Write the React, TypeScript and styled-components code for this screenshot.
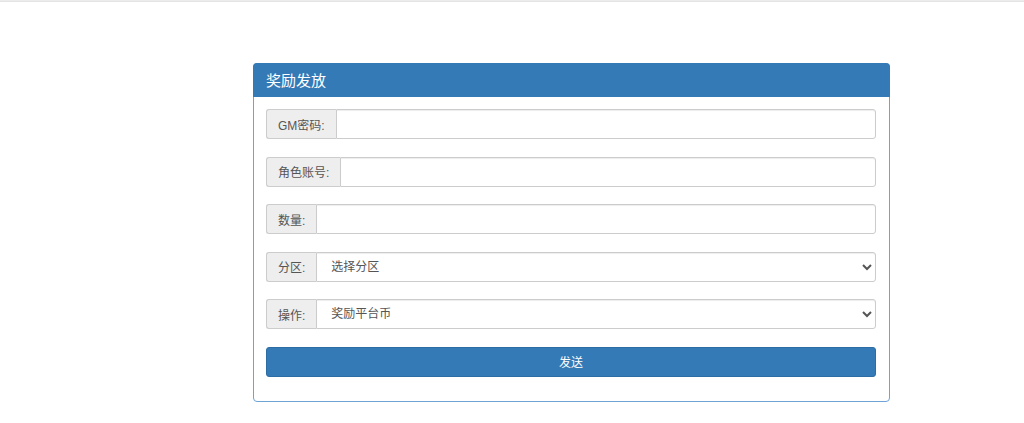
import React, { FC } from "react";
import styled, { createGlobalStyle } from "styled-components";

const GlobalStyle = createGlobalStyle`
  html, body {
    margin: 0;
    padding: 0;
    background: #fff;
    font-family: "Liberation Sans", "Noto Sans CJK SC", sans-serif;
    font-size: 12px;
    color: #333;
  }
  * {
    box-sizing: border-box;
  }
`;

const StyleTopLine = styled.div`
  height: 2px;
  border-top: 1px solid #ececec;
  border-bottom: 1px solid #e4e4e4;
`;

const StylePage = styled.div`
  display: flex;
  padding: 61px 0 0 253px;
`;

const StylePanel = styled.div`
  width: 637px;
  border: 1px solid #6ea3d5;
  border-radius: 4px;
  background: #fff;
`;

const StyleHeading = styled.div`
  height: 34px;
  margin: -1px -1px 0;
  display: flex;
  align-items: center;
  padding: 0 13px;
  background-color: #337ab7;
  color: #fff;
  border-top-left-radius: 4px;
  border-top-right-radius: 4px;
`;

const StyleTitle = styled.h3`
  margin: 0;
  font-size: 15px;
  font-weight: 400;
  line-height: 1;
`;

const StyleBody = styled.form`
  display: flex;
  flex-direction: column;
  gap: 17.5px;
  padding: 12px 13px 24px 12px;
`;

const StyleGroup = styled.div`
  display: flex;
  height: 30px;
`;

const StyleAddon = styled.span`
  display: flex;
  align-items: center;
  flex: none;
  padding: 0 11px;
  font-size: 12px;
  color: #555;
  background-color: #eee;
  border: 1px solid #ccc;
  border-right: 0;
  border-radius: 3px 0 0 3px;
  white-space: nowrap;
`;

const StyleInput = styled.input`
  flex: 1;
  min-width: 0;
  height: 30px;
  padding: 5px 10px;
  font: inherit;
  font-size: 12px;
  color: #555;
  background: #fff;
  border: 1px solid #ccc;
  border-radius: 0 3px 3px 0;
  box-shadow: inset 0 1px 1px rgba(0, 0, 0, 0.075);
  outline: none;
`;

const StyleSelect = styled.select`
  flex: 1;
  min-width: 0;
  height: 30px;
  padding: 0 10px;
  font: inherit;
  font-size: 12px;
  color: #555;
  background: #fff;
  border: 1px solid #ccc;
  border-radius: 0 3px 3px 0;
  box-shadow: inset 0 1px 1px rgba(0, 0, 0, 0.075);
  outline: none;
`;

const StyleButton = styled.button`
  height: 30px;
  font: inherit;
  font-size: 12px;
  color: #fff;
  background-color: #337ab7;
  border: 1px solid #2e6da4;
  border-radius: 3px;
  cursor: pointer;
`;

type FieldProps = {
  label: string;
};

const TextField: FC<FieldProps> = ({ label }) => (
  <StyleGroup>
    <StyleAddon>{label}</StyleAddon>
    <StyleInput type="text" />
  </StyleGroup>
);

type SelectProps = FieldProps & {
  options: string[];
};

const SelectField: FC<SelectProps> = ({ label, options }) => (
  <StyleGroup>
    <StyleAddon>{label}</StyleAddon>
    <StyleSelect>
      {options.map((item) => (
        <option key={item}>{item}</option>
      ))}
    </StyleSelect>
  </StyleGroup>
);

const App: FC = () => {
  return (
    <>
      <GlobalStyle />
      <StyleTopLine />
      <StylePage>
        <StylePanel>
          <StyleHeading>
            <StyleTitle>奖励发放</StyleTitle>
          </StyleHeading>
          <StyleBody onSubmit={(e) => e.preventDefault()}>
            <TextField label="GM密码:" />
            <TextField label="角色账号:" />
            <TextField label="数量:" />
            <SelectField label="分区:" options={["选择分区"]} />
            <SelectField label="操作:" options={["奖励平台币"]} />
            <StyleButton type="submit">发送</StyleButton>
          </StyleBody>
        </StylePanel>
      </StylePage>
    </>
  );
};

export default App;
